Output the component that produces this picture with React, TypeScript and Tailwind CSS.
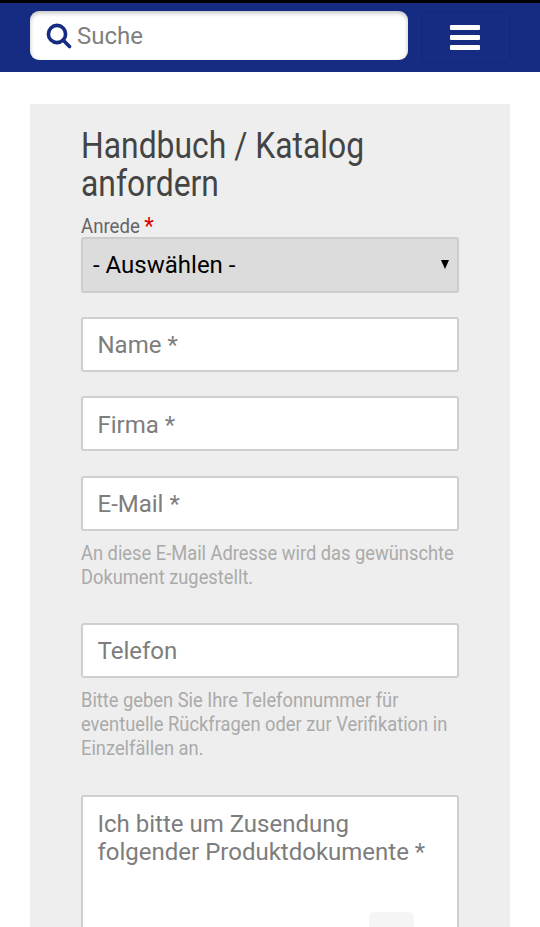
import React from "react";

const field =
  "block w-full h-[55px] bg-white border-2 border-[#cfcfcf] rounded-[3px] pl-[14.5px] pr-[14px] text-[24px] text-[#333] placeholder:text-[#7d7d7d] outline-none";
const help =
  "text-[20px] leading-[24px] text-[#aaaaaa] origin-left scale-x-[0.915] w-[440px] whitespace-nowrap";

export default function App() {
  return (
    <div className="h-[927px] w-[540px] overflow-hidden bg-white font-['Roboto',sans-serif] antialiased">
      <header className="h-[72px] bg-[#162b82] border-t-[3px] border-black flex items-start gap-[13px] pl-[30px] pt-[8px]">
        <div className="w-[378px] h-[49px] bg-white rounded-[9px] flex items-center pl-[16px] gap-[5px] shadow-[inset_0_2px_4px_rgba(0,0,0,0.25)]">
          <svg width="26" height="26" viewBox="0 0 26 26" fill="none" stroke="#162b82" strokeWidth="3.6" strokeLinecap="round">
            <circle cx="11" cy="11" r="8.6" />
            <path d="M17.5 17.5L23.5 23.5" />
          </svg>
          <span className="text-[24px] text-[#808080]">Suche</span>
        </div>
        <button className="w-[89px] h-[52px] rounded-[6px] border border-[#13267a] flex flex-col items-center justify-center gap-[5px] pr-[2px]">
          <span className="block w-[30px] h-[5px] rounded-[1px] bg-white" />
          <span className="block w-[30px] h-[5px] rounded-[1px] bg-white" />
          <span className="block w-[30px] h-[5px] rounded-[1px] bg-white" />
        </button>
      </header>

      <main className="pt-[32px] px-[30px]">
        <section className="bg-[#eeeeee] px-[51px] pt-[23px] h-[900px]">
          <h2 className="text-[36px] leading-[38px] text-[#444444] origin-left scale-x-[0.885] w-[440px]">
            Handbuch / Katalog
            <br />
            anfordern
          </h2>
          <label className="block mt-[11px] h-[23px] text-[20px] leading-[24px] text-[#666666] origin-left scale-x-[0.93]">
            Anrede <span className="text-[#dd0000] text-[24px] leading-[20px] relative top-[1px]">*</span>
          </label>
          <div className="relative h-[56px] bg-[#dcdcdc] border-2 border-[#cccccc] rounded-[3px] flex items-center pl-[10px] text-[24px] text-black">
            - Auswählen -
            <span className="absolute right-[8px] top-[21px] w-0 h-0 border-x-[4px] border-x-transparent border-t-[9px] border-t-black" />
          </div>
          <input className={`${field} mt-[24px]`} placeholder="Name *" readOnly />
          <input className={`${field} mt-[24px] pt-[2px]`} placeholder="Firma *" readOnly />
          <input className={`${field} mt-[25px]`} placeholder="E-Mail *" readOnly />
          <p className={`${help} mt-[10px]`}>
            An diese E-Mail Adresse wird das gewünschte
            <br />
            Dokument zugestellt.
          </p>
          <input className={`${field} mt-[34px] pt-[1px]`} placeholder="Telefon" readOnly />
          <p className={`${help} mt-[10px]`}>
            Bitte geben Sie Ihre Telefonnummer für
            <br />
            eventuelle Rückfragen oder zur Verifikation in
            <br />
            Einzelfällen an.
          </p>
          <div className="relative mt-[35px] h-[200px] bg-white border-2 border-[#cfcfcf] rounded-[3px] pl-[14.5px] pr-[14px] pt-[13px] text-[24px] leading-[28px] text-[#7d7d7d]">
            Ich bitte um Zusendung
            <br />
            folgender Produktdokumente *
            <span className="absolute left-[286px] top-[115px] w-[45px] h-[40px] rounded-[6px] bg-[#f5f5f5]" />
          </div>
        </section>
      </main>
    </div>
  );
}
